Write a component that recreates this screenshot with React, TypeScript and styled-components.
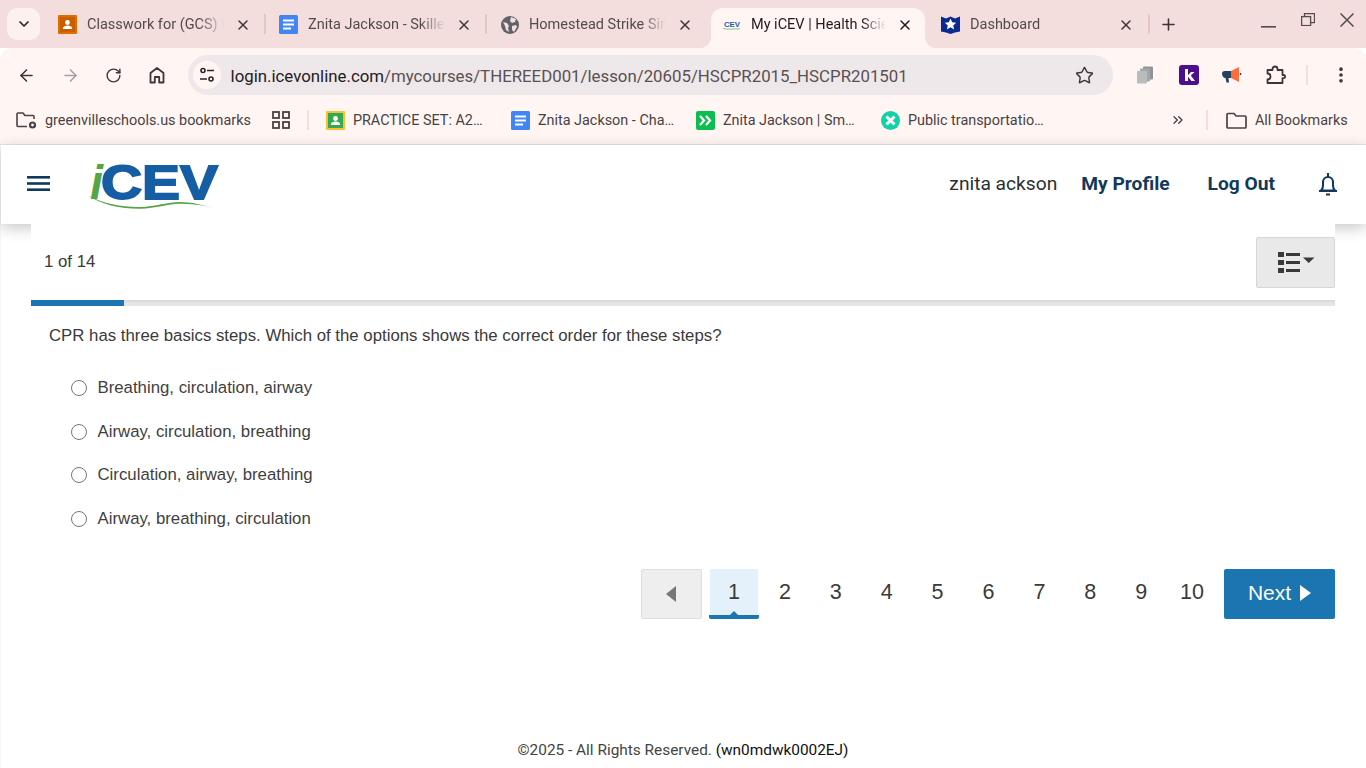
import React from 'react';
import styled, { createGlobalStyle } from 'styled-components';
import { ArrowLeft, ArrowRight, RotateCw, ChevronDown, ChevronsRight, Plus, X, Star, EllipsisVertical } from 'lucide-react';

const GlobalStyle = createGlobalStyle`
  html, body { margin: 0; padding: 0; height: 100%; overflow: hidden; background: #fff; }
  * { box-sizing: border-box; }
`;

const Page = styled.div`
  width: 1366px;
  height: 768px;
  display: flex;
  flex-direction: column;
  overflow: hidden;
  font-family: Roboto, "Liberation Sans", sans-serif;
`;

/* ---- browser chrome ---- */
const TabStrip = styled.div`
  height: 48px;
  flex: none;
  background: #f3dedd;
  display: flex;
  align-items: flex-end;
  padding-left: 7px;
  position: relative;
`;

const TabListButton = styled.div`
  width: 33px;
  height: 32px;
  margin: 0 4px 8px 0;
  border-radius: 10px;
  background: #fdf0ee;
  display: flex;
  align-items: center;
  justify-content: center;
  color: #2c2527;
`;

const Tab = styled.div<{ $active?: boolean; $w: number; $left: number; $right: number; $after?: number }>`
  width: ${(p) => p.$w}px;
  height: 40px;
  flex: none;
  display: flex;
  align-items: center;
  position: relative;
  margin-right: ${(p) => p.$after ?? 0}px;
  padding: 0 ${(p) => p.$right}px 7px ${(p) => p.$left}px;
  border-radius: 12px 12px 0 0;
  background: ${(p) => (p.$active ? '#fff6f4' : 'transparent')};
  color: ${(p) => (p.$active ? '#1f1b1c' : '#544a4c')};
  ${(p) =>
    p.$active &&
    `
    &::before, &::after {
      content: '';
      position: absolute;
      bottom: 0;
      width: 12px;
      height: 12px;
    }
    &::before { left: -12px; background: radial-gradient(circle at 0 0, transparent 12px, #fff6f4 12.5px); }
    &::after { right: -12px; background: radial-gradient(circle at 100% 0, transparent 12px, #fff6f4 12.5px); }
  `}
`;

const TabTitle = styled.span`
  flex: 1;
  min-width: 0;
  margin-left: 10px;
  font-size: 14.5px;
  line-height: 20px;
  white-space: nowrap;
  overflow: hidden;
  -webkit-mask-image: linear-gradient(to right, #000 82%, transparent 100%);
  mask-image: linear-gradient(to right, #000 82%, transparent 100%);
`;

const TabClose = styled.span<{ $active?: boolean }>`
  width: 20px;
  height: 20px;
  margin-left: 9px;
  flex: none;
  display: flex;
  align-items: center;
  justify-content: center;
  color: ${(p) => (p.$active ? '#1f1b1c' : '#3d3537')};
`;

const TabSep = styled.span`
  width: 2px;
  height: 20px;
  flex: none;
  margin: 0 -1px 14px -1px;
  background: #e3c5c7;
`;

const NewTab = styled.span`
  width: 24px;
  height: 24px;
  margin: 0 0 12px 7px;
  display: flex;
  align-items: center;
  justify-content: center;
  color: #3d3537;
`;

const WindowControls = styled.div`
  margin-left: auto;
  display: flex;
  align-self: flex-start;
  color: #544a4c;
`;

const WindowButton = styled.span<{ $offset: number }>`
  width: 39px;
  height: 40px;
  display: flex;
  justify-content: center;
  padding-top: ${(p) => p.$offset}px;
`;

const Toolbar = styled.div`
  height: 54px;
  flex: none;
  background: #fff6f4;
  border-radius: 12px 12px 0 0;
  display: flex;
  align-items: center;
  padding: 0 0 0 5px;
  color: #3d3537;
  position: relative;
`;

const NavButton = styled.span<{ $dim?: boolean }>`
  width: 43.4px;
  height: 36px;
  flex: none;
  display: flex;
  align-items: center;
  justify-content: center;
  color: ${(p) => (p.$dim ? '#a79fa0' : '#3d3537')};
`;

const Omnibox = styled.div`
  width: 925px;
  height: 40px;
  margin-left: 9px;
  flex: none;
  border-radius: 20px;
  background: #eee8ea;
  display: flex;
  align-items: center;
  padding: 0 19px 0 5px;
`;

const SiteChip = styled.span`
  width: 28px;
  height: 28px;
  flex: none;
  border-radius: 50%;
  background: #fff6f4;
  display: flex;
  align-items: center;
  justify-content: center;
`;

const UrlText = styled.span`
  margin-left: 10px;
  padding-top: 2px;
  flex: 1;
  font-size: 16.82px;
  color: #5a5052;
  white-space: nowrap;
  b { font-weight: 400; color: #1f1b1c; }
`;

const ExtensionRow = styled.div`
  display: flex;
  align-items: center;
  margin-left: 11px;
`;

const ExtensionSlot = styled.span`
  width: 43.3px;
  height: 32px;
  flex: none;
  display: flex;
  align-items: center;
  justify-content: center;
`;

const ToolbarSep = styled.span`
  width: 2px;
  height: 20px;
  margin: 0 23px 0 9px;
  background: #f6dcdc;
`;

const BookmarkBar = styled.div`
  height: 43px;
  flex: none;
  background: #fff6f4;
  border-bottom: 1px solid #ebe1e0;
  display: flex;
  align-items: center;
  padding: 0 0 6px 16px;
  font-size: 14.4px;
  color: #4a4143;
`;

const Bookmark = styled.span<{ $w?: number }>`
  width: ${(p) => (p.$w ? `${p.$w}px` : 'auto')};
  flex: none;
  display: flex;
  align-items: center;
  gap: 8px;
  white-space: nowrap;
`;

const AppsIcon = styled.span`
  margin: 0 17px 0 21px;
  display: flex;
`;

const BookmarkSep = styled.span`
  width: 2px;
  height: 20px;
  flex: none;
  background: #f6dcdc;
`;

const BookmarkList = styled.div`
  margin-left: 17px;
  display: flex;
`;

const OverflowChevron = styled.span`
  margin: 0 20px 0 104px;
  display: flex;
`;

const AllBookmarks = styled(Bookmark)`
  margin-left: 18px;
`;

/* ---- site body ---- */
const Viewport = styled.div`
  flex: 1;
  min-height: 0;
  display: flex;
  flex-direction: column;
  border-left: 1px solid #f7f7f7;
`;

const SiteHeader = styled.header`
  height: 79px;
  flex: none;
  background: #fff;
  box-shadow: 0 4px 14px rgba(0, 0, 0, 0.22);
  display: flex;
  align-items: center;
  padding: 0 28px 2px 26px;
  color: #12395b;
  position: relative;
`;

const LogoWrap = styled.span`
  margin-left: 38px;
  display: flex;
`;

const UserName = styled.span`
  margin-left: auto;
  font-size: 19.2px;
  color: #2a2f33;
`;

const HeaderLink = styled.a<{ $gap: number }>`
  font-size: 19.2px;
  font-weight: 700;
  color: #12395b;
  margin-left: ${(p) => p.$gap}px;
`;

const BellWrap = styled.span`
  margin-left: 43px;
  display: flex;
`;

/* ---- lesson ---- */
const Card = styled.main`
  flex: 1;
  margin: 0 31px 0 30px;
  background: #fff;
  position: relative;
  display: flex;
  flex-direction: column;
  min-height: 0;
`;

const TopRow = styled.div`
  height: 76px;
  flex: none;
  display: flex;
  align-items: flex-start;
  justify-content: space-between;
  padding: 13px 0 0 13px;
`;

const Counter = styled.span`
  font-family: "Liberation Sans", Arial, sans-serif;
  font-size: 16.8px;
  line-height: 50px;
  color: #3a3a3a;
`;

const OutlineButton = styled.button`
  width: 79px;
  height: 51px;
  padding: 0 0 0 2px;
  background: #e9e9e9;
  border: 1px solid #d6d6d6;
  border-radius: 2px;
  display: flex;
  align-items: center;
  justify-content: center;
`;

const Track = styled.div`
  height: 6px;
  flex: none;
  background: #e6e6e6;
  box-shadow: inset 0 2px 2px rgba(0, 0, 0, 0.06);
`;

const Fill = styled.div`
  height: 100%;
  background: #1a75b0;
`;

const Question = styled.p`
  margin: 18px 0 0 18px;
  font-family: "Liberation Sans", Arial, sans-serif;
  font-size: 16.8px;
  line-height: 24px;
  color: #3a3a3a;
`;

const Options = styled.div`
  margin: 18.3px 0 0 40px;
  display: flex;
  flex-direction: column;
`;

const Option = styled.label`
  height: 43.6px;
  display: flex;
  align-items: center;
  gap: 10.5px;
  font-family: "Liberation Sans", Arial, sans-serif;
  font-size: 16.8px;
  color: #3f3f3f;
`;

const Radio = styled.span`
  width: 16px;
  height: 16px;
  flex: none;
  border: 1.4px solid #767676;
  border-radius: 50%;
  background: #fff;
`;

const Pager = styled.nav`
  margin-top: 28.7px;
  display: flex;
  justify-content: flex-end;
  align-items: stretch;
  height: 50px;
  font-family: "Liberation Sans", Arial, sans-serif;
`;

const PrevButton = styled.button`
  width: 61px;
  padding: 0;
  margin-right: 7px;
  background: #eee;
  border: 1px solid #dedede;
  border-radius: 2px;
  display: flex;
  align-items: center;
  justify-content: center;
`;

const PageNumber = styled.span<{ $active?: boolean }>`
  width: 50.9px;
  flex: none;
  position: relative;
  display: flex;
  align-items: center;
  justify-content: center;
  padding-bottom: 4px;
  font-size: 21.5px;
  color: #3a3a3a;
  ${(p) =>
    p.$active &&
    `
    background: linear-gradient(#e4f1fb, #e4f1fb) center / 48px 100% no-repeat;
    &::after {
      content: '';
      position: absolute;
      left: 0;
      right: 0.9px;
      bottom: 0;
      height: 4px;
      border-radius: 0 0 2px 2px;
      background: #1a75b0;
    }
    &::before {
      content: '';
      position: absolute;
      left: 50%;
      bottom: 4px;
      margin-left: -4.5px;
      border-left: 4px solid transparent;
      border-right: 4px solid transparent;
      border-bottom: 4px solid #1a75b0;
    }
  `}
`;

const NextButton = styled.button`
  width: 111px;
  margin-left: 6.5px;
  padding: 0 0 2px 0;
  background: #1a75b0;
  border: none;
  border-radius: 2px;
  color: #fff;
  font-family: "Liberation Sans", Arial, sans-serif;
  font-size: 21px;
  display: flex;
  align-items: center;
  justify-content: center;
  gap: 9px;
`;

const Footer = styled.footer`
  margin-top: auto;
  height: 36px;
  text-align: center;
  font-size: 15.4px;
  line-height: 20px;
  padding-top: 8px;
  color: #444;
  span { color: #111; }
`;

/* ---- drawn icons ---- */
const ClassroomIcon = ({ orange }: { orange?: boolean }) => (
  <svg width="19" height="19" viewBox="0 0 19 19" style={{ flex: 'none' }}>
    <rect width="19" height="19" rx="1" fill={orange ? '#e06c00' : '#fbc02d'} />
    <rect x="2" y="2" width="15" height="15" fill={orange ? '#c75e00' : '#34a853'} />
    <circle cx="9.5" cy="7.5" r="2.4" fill="#fff" />
    <path d="M4.8 14c0-2.4 2.4-3.4 4.7-3.4s4.7 1 4.7 3.4z" fill="#fff" />
  </svg>
);

const DocsIcon = () => (
  <svg width="19" height="19" viewBox="0 0 19 19" style={{ flex: 'none' }}>
    <rect width="19" height="19" rx="1.5" fill="#4285f4" />
    <path d="M4 4.5h11v2H4zM4 8.5h11v2H4zM4 12.5h8v2H4z" fill="#fff" />
  </svg>
);

const GlobeIcon = () => (
  <svg width="18" height="18" viewBox="0 0 18 18" style={{ flex: 'none' }}>
    <circle cx="9" cy="9" r="9" fill="#5f6368" />
    <path d="M2 6l4 1 2 3-1 2 1 4-3-2-1-4zM10 1l5 2-1 3-3 1-2-2zM11 10l4-1 1 2-3 5-2-2z" fill="#f3dedd" />
  </svg>
);

const CevMiniIcon = () => (
  <svg width="19" height="12" viewBox="0 0 19 12" style={{ flex: 'none' }}>
    <path d="M1 9.5c5 1.5 11 0 17 .5" stroke="#8cc08c" strokeWidth="1" fill="none" />
    <text x="2" y="8" fontFamily="Liberation Sans" fontWeight="700" fontSize="7.5" fill="#1a5ea3" textLength="16" lengthAdjust="spacingAndGlyphs">CEV</text>
  </svg>
);

const ShieldIcon = () => (
  <svg width="19" height="19" viewBox="0 0 19 19" style={{ flex: 'none' }}>
    <path d="M0 1.5l5 2 4.5-2 4.5 2 5-2V16.5l-5 1-4.5 1.5-4.5-1.5-5-1z" fill="#0b2a8f" />
    <path d="M9.5 3.5l1.7 3.800 4 .4-3 2.700.9 4-3.600-2.100-3.600 2.100.9-4-3-2.700 4-.4z" fill="#fff" />
  </svg>
);

const HomeIcon = () => (
  <svg width="20" height="20" viewBox="0 0 20 20" fill="none" stroke="#3d3537" strokeWidth="1.8" strokeLinejoin="round">
    <path d="M3.5 17.5V8L10 3l6.5 5v9.5h-4.3V12H7.8v5.5z" />
  </svg>
);

const TuneIcon = () => (
  <svg width="18" height="18" viewBox="0 0 18 18" fill="none" stroke="#2b2527" strokeWidth="1.6">
    <circle cx="5" cy="4.5" r="2" />
    <path d="M9 4.5h7M2 13h7" />
    <circle cx="13" cy="13" r="2" />
  </svg>
);

const CopyIcon = () => (
  <svg width="20" height="20" viewBox="0 0 20 20">
    <rect x="8" y="1.5" width="10" height="13" rx="1" fill="#8f9496" />
    <rect x="5" y="3.5" width="10" height="13" rx="1" fill="#a3a7a9" />
    <rect x="2" y="6" width="10" height="12.5" rx="1" fill="#b9bcbd" />
  </svg>
);

const KahootIcon = () => (
  <svg width="20" height="20" viewBox="0 0 20 20">
    <rect width="20" height="20" rx="3" fill="#4b0f8e" />
    <path d="M6 4h3v6l3-3h3.5l-3.7 3.5L16 16h-3.5L9 11.8V16H6z" fill="#fff" />
  </svg>
);

const MegaphoneIcon = () => (
  <svg width="20" height="20" viewBox="0 0 20 20">
    <path d="M0 8.5C0 6.9 1.2 6 2.500 6H9v7H6.500l.5 4.500H4.500L3.500 13C1.500 13 0 11 0 8.500z" fill="#24405e" />
    <path d="M9 6l8-4v15l-8-4z" fill="#ff6d3a" />
    <path d="M18.5 8v2" stroke="#24405e" strokeWidth="1.5" />
  </svg>
);

const PuzzleIcon = () => (
  <svg width="21" height="21" viewBox="0 0 21 21" fill="none" stroke="#3d3537" strokeWidth="1.8" strokeLinejoin="round">
    <path d="M2.5 5h5V4a2.500 2.500 0 0 1 5 0v1h5v5h1a1.600 1.600 0 0 1 0 3.200h-1V18H2.500v-3.500a3 3 0 0 0 0-6z" />
  </svg>
);

const BookmarkFolderGear = () => (
  <svg width="21" height="19" viewBox="0 0 21 19" fill="none" stroke="#4a4143" strokeWidth="1.6" style={{ flex: 'none' }}>
    <path d="M11 15.5H2a1 1 0 0 1-1-1V3a1 1 0 0 1 1-1h5l2 2.500h8a1 1 0 0 1 1 1V8" />
    <circle cx="16.5" cy="14" r="2.5" strokeWidth="2.2" />
  </svg>
);

const FolderIcon = () => (
  <svg width="21" height="17" viewBox="0 0 21 17" fill="none" stroke="#4a4143" strokeWidth="1.7" style={{ flex: 'none' }}>
    <path d="M2 1.5h6l2 2.500h9a1 1 0 0 1 1 1v10a1 1 0 0 1-1 1H2a1 1 0 0 1-1-1V2.500a1 1 0 0 1 1-1z" />
  </svg>
);

const AppsGrid = () => (
  <svg width="18" height="18" viewBox="0 0 18 18" fill="none" stroke="#4a4143" strokeWidth="1.8">
    <rect x="1" y="1" width="6" height="6" />
    <rect x="11" y="1" width="6" height="6" />
    <rect x="1" y="11" width="6" height="6" />
    <rect x="11" y="11" width="6" height="6" />
  </svg>
);

const GreenArrowsIcon = () => (
  <svg width="19" height="19" viewBox="0 0 19 19" style={{ flex: 'none' }}>
    <rect width="19" height="19" rx="2" fill="#0dbd4f" />
    <path d="M4 5l4 4.500L4 14M10 5l4 4.500-4 4.500" stroke="#fff" strokeWidth="2.2" fill="none" />
  </svg>
);

const TealCrossIcon = () => (
  <svg width="19" height="19" viewBox="0 0 19 19" style={{ flex: 'none' }}>
    <circle cx="9.5" cy="9.5" r="9.5" fill="#14d0a5" />
    <path d="M5.5 5.5l8 8M13.5 5.5l-8 8" stroke="#fff" strokeWidth="3" />
  </svg>
);

const MinimizeIcon = () => (
  <svg width="15" height="2" viewBox="0 0 15 2">
    <rect width="15" height="1.6" fill="#544a4c" />
  </svg>
);

const RestoreIcon = () => (
  <svg width="14" height="13" viewBox="0 0 14 13" fill="none" stroke="#544a4c" strokeWidth="1.3">
    <rect x="0.6" y="3.6" width="9" height="9" />
    <path d="M3.5 3.5V.6h10v9H10" />
  </svg>
);

const CloseWindowIcon = () => (
  <svg width="14" height="14" viewBox="0 0 14 14" stroke="#544a4c" strokeWidth="1.5">
    <path d="M.5.5l13 13M13.5.5l-13 13" />
  </svg>
);

const HamburgerIcon = () => (
  <svg width="23" height="15" viewBox="0 0 23 15" fill="#12395b">
    <rect width="23" height="2.6" />
    <rect y="6.2" width="23" height="2.6" />
    <rect y="12.4" width="23" height="2.6" />
  </svg>
);

const BellIcon = () => (
  <svg width="20" height="24" viewBox="0 0 20 24" fill="none" stroke="#12395b" strokeWidth="2.1" strokeLinejoin="round">
    <path d="M3 18.5c1.500-1.500 2-3 2-5V10a5 5 0 0 1 10 0v3.500c0 2 .5 3.500 2 5z" />
    <path d="M1 19h18M10 1v4M8 22.5h4" />
  </svg>
);

const Logo = () => (
  <svg width="132" height="50" viewBox="0 0 132 50">
    <text x="2" y="40" fontFamily="Liberation Sans" fontStyle="italic" fontWeight="700" fontSize="48" fill="#55a546" textLength="13" lengthAdjust="spacingAndGlyphs">i</text>
    <text x="13" y="39.5" fontFamily="Liberation Sans" fontWeight="700" fontSize="48" fill="#165ea3" stroke="#165ea3" strokeWidth="1.8" textLength="117" lengthAdjust="spacingAndGlyphs">CEV</text>
    <path d="M0 36.5C16 45 36 48.5 52 48c16-.5 28-5 40-5 12 0 22 3 32 5.500-10-2.500-20-3.700-32-3.700-12 .2-24 4.700-40 5C34 50 14 46 0 36.500z" fill="#55a546" />
  </svg>
);

const ListCaretIcon = () => (
  <svg width="37" height="22" viewBox="0 0 37 22" fill="#3a3a3a">
    <rect x="0" y="0" width="6" height="5" />
    <rect x="0" y="8" width="6" height="5" />
    <rect x="0" y="16" width="6" height="5" />
    <rect x="8" y="1" width="14" height="3" />
    <rect x="8" y="9" width="14" height="3" />
    <rect x="8" y="17" width="14" height="3" />
    <path d="M25 5.5h11.500L30.750 11z" />
  </svg>
);

const tabs = [
  { title: 'Classwork for (GCS) U', icon: <ClassroomIcon orange />, w: 221, left: 14, right: 12 },
  { title: 'Znita Jackson - Skille', icon: <DocsIcon />, w: 221, left: 14, right: 12 },
  { title: 'Homestead Strike Sim', icon: <GlobeIcon />, w: 221, left: 15, right: 12, after: 4 },
  { title: 'My iCEV | Health Scie', icon: <CevMiniIcon />, w: 214, left: 11, right: 10, active: true },
  { title: 'Dashboard', icon: <ShieldIcon />, w: 224, left: 16, right: 13 },
];

const bookmarks = [
  { label: 'PRACTICE SET: A2…', icon: <ClassroomIcon /> },
  { label: 'Znita Jackson - Cha…', icon: <DocsIcon /> },
  { label: 'Znita Jackson | Sm…', icon: <GreenArrowsIcon /> },
  { label: 'Public transportatio…', icon: <TealCrossIcon /> },
];

const answers = [
  'Breathing, circulation, airway',
  'Airway, circulation, breathing',
  'Circulation, airway, breathing',
  'Airway, breathing, circulation',
];

export default function App() {
  return (
    <Page>
      <GlobalStyle />
      <TabStrip>
        <TabListButton>
          <ChevronDown size={16} strokeWidth={2.6} />
        </TabListButton>
        {tabs.map((t, i) => (
          <React.Fragment key={t.title}>
            <Tab $active={t.active} $w={t.w} $left={t.left} $right={t.right} $after={t.after}>
              {t.icon}
              <TabTitle>{t.title}</TabTitle>
              <TabClose $active={t.active}>
                <X size={16} strokeWidth={2.2} />
              </TabClose>
            </Tab>
            {(i < 2 || i === 4) && <TabSep />}
          </React.Fragment>
        ))}
        <NewTab>
          <Plus size={19} strokeWidth={2} />
        </NewTab>
        <WindowControls>
          <WindowButton $offset={26}>
            <MinimizeIcon />
          </WindowButton>
          <WindowButton $offset={13}>
            <RestoreIcon />
          </WindowButton>
          <WindowButton $offset={13}>
            <CloseWindowIcon />
          </WindowButton>
        </WindowControls>
      </TabStrip>

      <Toolbar>
        <NavButton>
          <ArrowLeft size={19} strokeWidth={2} />
        </NavButton>
        <NavButton $dim>
          <ArrowRight size={19} strokeWidth={2} />
        </NavButton>
        <NavButton>
          <RotateCw size={17} strokeWidth={2} />
        </NavButton>
        <NavButton>
          <HomeIcon />
        </NavButton>
        <Omnibox>
          <SiteChip>
            <TuneIcon />
          </SiteChip>
          <UrlText>
            <b>login.icevonline.com</b>/mycourses/THEREED001/lesson/20605/HSCPR2015_HSCPR201501
          </UrlText>
          <Star size={19} strokeWidth={1.8} color="#3d3537" />
        </Omnibox>
        <ExtensionRow>
          <ExtensionSlot>
            <CopyIcon />
          </ExtensionSlot>
          <ExtensionSlot>
            <KahootIcon />
          </ExtensionSlot>
          <ExtensionSlot>
            <MegaphoneIcon />
          </ExtensionSlot>
          <ExtensionSlot>
            <PuzzleIcon />
          </ExtensionSlot>
        </ExtensionRow>
        <ToolbarSep />
        <EllipsisVertical size={20} strokeWidth={2.4} />
      </Toolbar>

      <BookmarkBar>
        <Bookmark>
          <BookmarkFolderGear />
          greenvilleschools.us bookmarks
        </Bookmark>
        <AppsIcon>
          <AppsGrid />
        </AppsIcon>
        <BookmarkSep />
        <BookmarkList>
          {bookmarks.map((b) => (
            <Bookmark key={b.label} $w={185}>
              {b.icon}
              {b.label}
            </Bookmark>
          ))}
        </BookmarkList>
        <OverflowChevron>
          <ChevronsRight size={16} strokeWidth={2} />
        </OverflowChevron>
        <BookmarkSep />
        <AllBookmarks>
          <FolderIcon />
          All Bookmarks
        </AllBookmarks>
      </BookmarkBar>

      <Viewport>
        <SiteHeader>
          <HamburgerIcon />
          <LogoWrap>
            <Logo />
          </LogoWrap>
          <UserName>znita ackson</UserName>
          <HeaderLink $gap={24}>My Profile</HeaderLink>
          <HeaderLink $gap={38}>Log Out</HeaderLink>
          <BellWrap>
            <BellIcon />
          </BellWrap>
        </SiteHeader>

        <Card>
          <TopRow>
            <Counter>1 of 14</Counter>
            <OutlineButton>
              <ListCaretIcon />
            </OutlineButton>
          </TopRow>
          <Track>
            <Fill style={{ width: `${(1 / 14) * 100}%` }} />
          </Track>
          <Question>CPR has three basics steps. Which of the options shows the correct order for these steps?</Question>
          <Options>
            {answers.map((a) => (
              <Option key={a}>
                <Radio />
                {a}
              </Option>
            ))}
          </Options>
          <Pager>
            <PrevButton>
              <svg width="12" height="16" viewBox="0 0 12 16">
                <path d="M11 0v16L1 8z" fill="#777" />
              </svg>
            </PrevButton>
            {[1, 2, 3, 4, 5, 6, 7, 8, 9, 10].map((n) => (
              <PageNumber key={n} $active={n === 1}>
                {n}
              </PageNumber>
            ))}
            <NextButton>
              Next
              <svg width="11" height="16" viewBox="0 0 11 16">
                <path d="M0 0v16l11-8z" fill="#fff" />
              </svg>
            </NextButton>
          </Pager>
          <Footer>
            ©2025 - All Rights Reserved. <span>(wn0mdwk0002EJ)</span>
          </Footer>
        </Card>
      </Viewport>
    </Page>
  );
}
